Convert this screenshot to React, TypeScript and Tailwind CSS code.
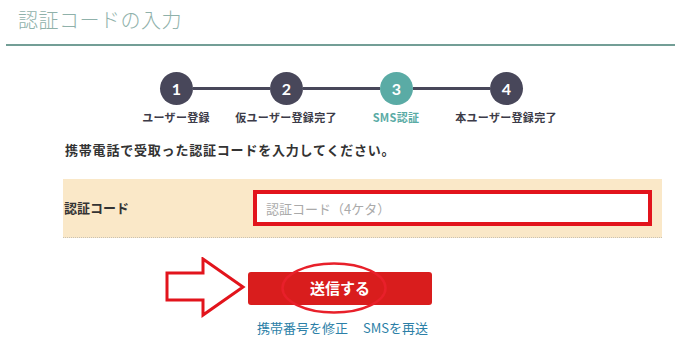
import React from "react";

const STEPS = [
  { n: "1", label: "ユーザー登録", active: false },
  { n: "2", label: "仮ユーザー登録完了", active: false },
  { n: "3", label: "SMS認証", active: true },
  { n: "4", label: "本ユーザー登録完了", active: false },
];

const FONT = "[font-family:'Noto_Sans_CJK_JP','Noto_Sans',sans-serif]";

export default function App() {
  return (
    <div className={`relative w-[689px] h-[353px] overflow-hidden bg-white ${FONT}`}>
      {/* page title */}
      <div className="ml-[6px] mr-[14px] h-[46px] border-b-2 border-[#739e96] pl-[12px] pt-[5px]">
        <h1 className="text-[20px] leading-[30px] font-light text-[#8fb1aa] tracking-[0.5px]">認証コードの入力</h1>
      </div>

      {/* steps */}
      <div className="mt-[26px] ml-[160px] flex items-center">
        {STEPS.map((s, i) => (
          <React.Fragment key={s.n}>
            <div
              className={`grid h-[33px] w-[33px] place-items-center rounded-full text-[16px] font-bold text-white [font-family:Lato,sans-serif] ${
                s.active ? "bg-[#5aaba5]" : "bg-[#48475a]"
              }`}
            >
              {s.n}
            </div>
            {i < STEPS.length - 1 && <div className="h-[3px] w-[77px] bg-[#48475a]" />}
          </React.Fragment>
        ))}
      </div>
      <div className="mt-[4px] ml-[121px] flex">
        {STEPS.map((s) => (
          <div
            key={s.n}
            className={`w-[110px] text-center text-[11px] leading-[16px] font-bold tracking-[0.3px] ${
              s.active ? "text-[#5aaba5]" : "text-[#3c3b48]"
            }`}
          >
            {s.label}
          </div>
        ))}
      </div>

      {/* instruction */}
      <p className="mt-[15px] ml-[65px] text-[13px] leading-[20px] font-bold tracking-[0.8px] text-[#333]">
        携帯電話で受取った認証コードを入力してください。
      </p>

      {/* form row */}
      <div className="mt-[19px] ml-[63px] flex h-[59px] w-[599px] items-center border-b border-dotted border-[#c9c2b4] bg-[#fae8c8]">
        <div className="w-[190px] pl-[1px] text-[13px] font-bold text-[#333]">認証コード</div>
        <input
          className="h-[36px] w-[399px] border-[4px] border-[#e2141c] bg-white px-[9px] text-[13px] text-[#333] outline-none placeholder:text-[#aaa]"
          placeholder="認証コード（4ケタ）"
        />
      </div>

      {/* submit */}
      <div className="mt-[34px] ml-[248px]">
        <button className="h-[33px] w-[184px] rounded-[3px] bg-[#d91d1d] text-[15px] font-bold text-white">送信する</button>
      </div>
      <div className="mt-[14px] ml-[257px] flex gap-[15px] text-[13px] leading-[18px] text-[#2c7fa7]">
        <span>携帯番号を修正</span>
        <span>SMSを再送</span>
      </div>

      {/* annotations */}
      <svg className="absolute left-[165px] top-[257px]" width="82" height="62" viewBox="0 0 82 62">
        <path
          d="M2 16 H38 V2 L78 30 L38 58 V43 H2 Z"
          fill="#fff"
          stroke="#e2141c"
          strokeWidth="3"
          strokeLinejoin="miter"
        />
      </svg>
      <svg className="absolute left-[279px] top-[260px]" width="110" height="56" viewBox="0 0 110 56">
        <ellipse cx="55" cy="28" rx="51.5" ry="24.5" fill="none" stroke="#e8202a" strokeWidth="2.5" />
      </svg>
    </div>
  );
}
